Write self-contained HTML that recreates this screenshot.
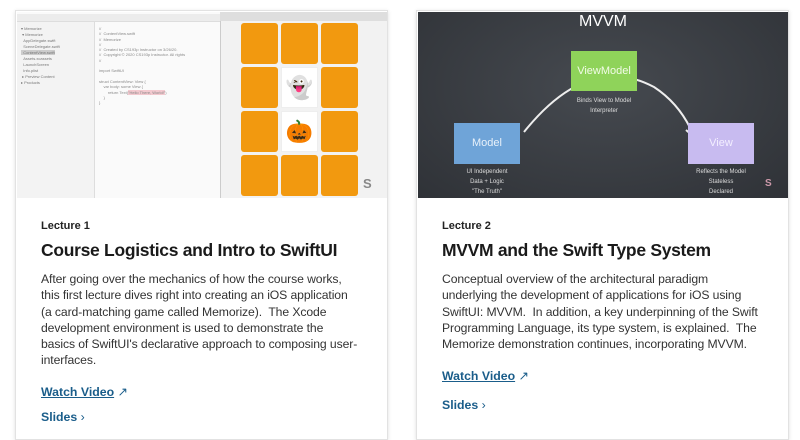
<!DOCTYPE html>
<html><head><meta charset="utf-8"><style>
*{margin:0;padding:0;box-sizing:border-box}
body{width:800px;height:427px;background:#fff;position:relative;overflow:hidden;font-family:"Liberation Sans",sans-serif;color:#222}
.card{position:absolute;top:10px;width:373px;height:430px;background:#fff;border:1px solid #e2e2e2;box-shadow:0 1px 4px rgba(0,0,0,.12)}
.img{position:absolute;left:1px;top:1px;width:370px;height:186px;overflow:hidden}
.t{position:absolute;left:25px;white-space:nowrap}
.lec{top:209px;font-size:11px;font-weight:bold}
.title{top:229px;font-size:17.5px;font-weight:bold;letter-spacing:-0.3px;color:#1a1a1a}
.body{top:260px;font-size:12.2px;line-height:16.3px;color:#333;letter-spacing:-0.1px}
.link{font-size:12.3px;font-weight:bold;color:#1a5d8a}
.abs{position:absolute}
</style></head><body>

<div class="card" style="left:15px">
 <div class="img" style="background:#fafafa">
  <div class="abs" style="left:0;top:2px;width:78px;height:184px;background:#f3f3f3;border-right:1px solid #ddd"></div>
  <div class="abs" style="left:0;top:2px;width:370px;height:8px;background:#ececec;border-bottom:1px solid #ddd"></div>
  <div class="abs" style="left:4px;top:14px;width:60px;height:60px;font-size:4px;line-height:6px;color:#777">▾ Memorize<br>&nbsp;▾ Memorize<br>&nbsp;&nbsp;AppDelegate.swift<br>&nbsp;&nbsp;SceneDelegate.swift<br><span style="background:#ccc">&nbsp;&nbsp;ContentView.swift</span><br>&nbsp;&nbsp;Assets.xcassets<br>&nbsp;&nbsp;LaunchScreen<br>&nbsp;&nbsp;Info.plist<br>&nbsp;▸ Preview Content<br>▸ Products</div>
  <div class="abs" style="left:82px;top:14px;font-size:4px;line-height:5.3px;color:#888;white-space:pre">//
//  ContentView.swift
//  Memorize
//
//  Created by CS193p Instructor on 3/26/20.
//  Copyright © 2020 CS193p Instructor. All rights
//

import SwiftUI

struct ContentView: View {
    var body: some View {
        return Text(<span style="background:#f3c9cf">"Hello There, World!"</span>)
    }
}</div>
  <div class="abs" style="left:203px;top:0;width:167px;height:186px;background:#f2f2f2;border-left:1px solid #ccc"></div>
  <div class="abs" style="left:203px;top:0;width:167px;height:9px;background:#dedede"></div>
  <div class="abs" style="left:224px;top:11px;width:122px;height:175px">
   <div style="display:grid;grid-template-columns:37px 37px 37px;grid-template-rows:41px 41px 41px 41px;gap:3px 3px">
    <div style="background:#f2990f;border-radius:3px"></div><div style="background:#f2990f;border-radius:3px"></div><div style="background:#f2990f;border-radius:3px"></div>
    <div style="background:#f2990f;border-radius:3px"></div><div style="background:#fff;border:1px solid #eee;font-size:22px;text-align:center;line-height:40px">👻</div><div style="background:#f2990f;border-radius:3px"></div>
    <div style="background:#f2990f;border-radius:3px"></div><div style="background:#fff;border:1px solid #eee;font-size:22px;text-align:center;line-height:40px">🎃</div><div style="background:#f2990f;border-radius:3px"></div>
    <div style="background:#f2990f;border-radius:3px"></div><div style="background:#f2990f;border-radius:3px"></div><div style="background:#f2990f;border-radius:3px"></div>
   </div>
  </div>
  <div class="abs" style="left:346px;top:164px;font-size:13px;font-weight:bold;color:#888">S</div>
 </div>
 <div class="t lec">Lecture 1</div>
 <div class="t title">Course Logistics and Intro to SwiftUI</div>
 <div class="t body">After going over the mechanics of how the course works,<br>this first lecture dives right into creating an iOS application<br>(a card-matching game called Memorize).&nbsp; The Xcode<br>development environment is used to demonstrate the<br>basics of SwiftUI's declarative approach to composing user-<br>interfaces.</div>
 <div class="t link" style="top:374px"><span style="text-decoration:underline">Watch Video</span> <span style="font-weight:normal">↗</span></div>
 <div class="t link" style="top:399px">Slides <span style="font-weight:normal">›</span></div>
</div>

<div class="card" style="left:416px">
 <div class="img" style="background:#3a3e44">
  <div class="abs" style="left:0;top:0;width:370px;height:186px;background:radial-gradient(ellipse at 50% 40%,#464a50,#2f3237)"></div>
  <div class="abs" style="left:0;width:370px;top:1px;text-align:center;font-size:16px;color:#fff">MVVM</div>
  <svg class="abs" style="left:0;top:0" width="370" height="186"><path d="M106 120 Q170 40 236 75 Q262 92 275 122" fill="none" stroke="#eee" stroke-width="2"/><path d="M268 118 L275 124 L278 114" fill="none" stroke="#eee" stroke-width="2"/></svg>
  <div class="abs" style="left:153px;top:39px;width:66px;height:40px;background:#8fd35a;color:#f2fbe8;font-size:11px;text-align:center;line-height:40px">ViewModel</div>
  <div class="abs" style="left:36px;top:111px;width:66px;height:41px;background:#6fa4d8;color:#e8f1fa;font-size:11px;text-align:center;line-height:41px">Model</div>
  <div class="abs" style="left:270px;top:111px;width:66px;height:41px;background:#c8bbf0;color:#f3efff;font-size:11px;text-align:center;line-height:41px">View</div>
  <div class="abs" style="left:136px;top:84px;width:100px;text-align:center;font-size:6px;line-height:10px;color:#ddd">Binds View to Model<br>Interpreter</div>
  <div class="abs" style="left:19px;top:155px;width:100px;text-align:center;font-size:6px;line-height:10px;color:#ddd">UI Independent<br>Data + Logic<br>"The Truth"</div>
  <div class="abs" style="left:253px;top:155px;width:100px;text-align:center;font-size:6px;line-height:10px;color:#ddd">Reflects the Model<br>Stateless<br>Declared</div>
  <div class="abs" style="left:347px;top:166px;font-size:10px;color:#c9a;font-weight:bold">S</div>
 </div>
 <div class="t lec">Lecture 2</div>
 <div class="t title">MVVM and the Swift Type System</div>
 <div class="t body">Conceptual overview of the architectural paradigm<br>underlying the development of applications for iOS using<br>SwiftUI: MVVM.&nbsp; In addition, a key underpinning of the Swift<br>Programming Language, its type system, is explained.&nbsp; The<br>Memorize demonstration continues, incorporating MVVM.</div>
 <div class="t link" style="top:358px"><span style="text-decoration:underline">Watch Video</span> <span style="font-weight:normal">↗</span></div>
 <div class="t link" style="top:387px">Slides <span style="font-weight:normal">›</span></div>
</div>
</body></html>
